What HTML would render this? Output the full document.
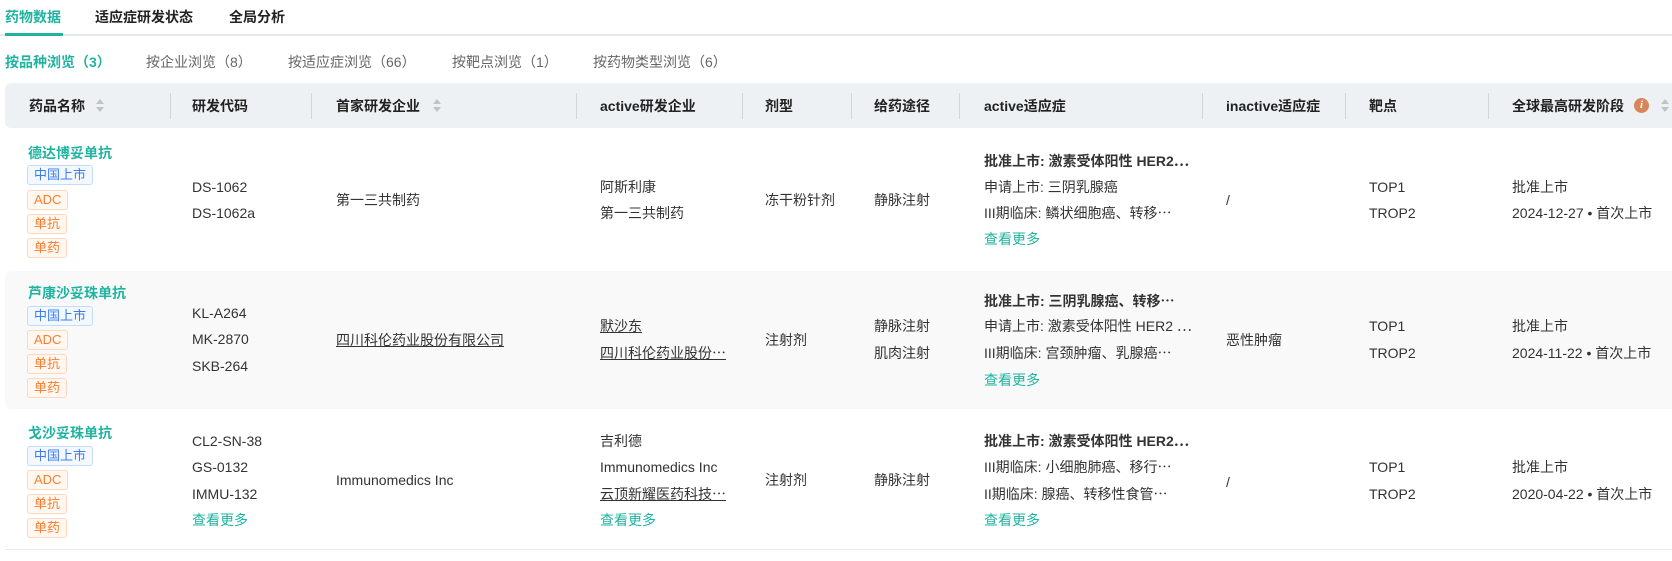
<!DOCTYPE html>
<html><head><meta charset="utf-8"><style>
*{margin:0;padding:0;box-sizing:border-box}
body{width:1672px;height:561px;overflow:hidden;background:#fff;position:relative;font-family:"Liberation Sans","Noto Sans CJK SC",sans-serif;font-size:14px;color:#333}
.a{position:absolute;line-height:20px;white-space:nowrap}
.b{font-weight:bold}
.g{color:#1fb3a0}
.u{text-decoration:underline}
.h{font-weight:bold;color:#222}
.sep{position:absolute;top:93px;width:1px;height:26px;background:#cfd6d8}
.tag{position:absolute;height:20px;line-height:18px;font-size:13px;padding:0 6px;border:1px solid #ffd8bf;background:#fff7f0;color:#fa7d2d;border-radius:3px}
.tag.bl{border-color:#c6dafc;background:#f3f8ff;color:#3b7cf0}
.sort{position:absolute;width:8px;height:14px}
.sort:before{content:"";position:absolute;left:0;top:0;border-left:4px solid transparent;border-right:4px solid transparent;border-bottom:5px solid #c0c4c8}
.sort:after{content:"";position:absolute;left:0;top:8px;border-left:4px solid transparent;border-right:4px solid transparent;border-top:5px solid #c0c4c8}
</style></head><body>
<div class="a b g" style="left:5px;top:7px">药物数据</div>
<div class="a b" style="left:95px;top:7px;color:#222">适应症研发状态</div>
<div class="a b" style="left:229px;top:7px;color:#222">全局分析</div>
<div style="position:absolute;left:0;top:34px;width:1672px;height:2px;background:#e6e8ef"></div>
<div style="position:absolute;left:5px;top:33px;width:58px;height:3px;background:#1fb3a0"></div>
<div class="a b g" style="left:5px;top:52px">按品种浏览（3）</div>
<div class="a" style="left:146px;top:52px;color:#666">按企业浏览（8）</div>
<div class="a" style="left:288px;top:52px;color:#666">按适应症浏览（66）</div>
<div class="a" style="left:452px;top:52px;color:#666">按靶点浏览（1）</div>
<div class="a" style="left:593px;top:52px;color:#666">按药物类型浏览（6）</div>
<div style="position:absolute;left:5px;top:83px;width:1667px;height:45px;background:#eef1f3;border-radius:6px 0 0 6px"></div>
<div class="a h" style="left:29px;top:96px">药品名称</div><div class="sort" style="left:96px;top:99px"></div>
<div class="sep" style="left:170px"></div>
<div class="a h" style="left:192px;top:96px">研发代码</div>
<div class="sep" style="left:311px"></div>
<div class="a h" style="left:336px;top:96px">首家研发企业</div><div class="sort" style="left:433px;top:99px"></div>
<div class="sep" style="left:576px"></div>
<div class="a h" style="left:600px;top:96px">active研发企业</div>
<div class="sep" style="left:742px"></div>
<div class="a h" style="left:765px;top:96px">剂型</div>
<div class="sep" style="left:851px"></div>
<div class="a h" style="left:874px;top:96px">给药途径</div>
<div class="sep" style="left:959px"></div>
<div class="a h" style="left:984px;top:96px">active适应症</div>
<div class="sep" style="left:1202px"></div>
<div class="a h" style="left:1226px;top:96px">inactive适应症</div>
<div class="sep" style="left:1345px"></div>
<div class="a h" style="left:1369px;top:96px">靶点</div>
<div class="sep" style="left:1488px"></div>
<div class="a h" style="left:1512px;top:96px">全球最高研发阶段</div>
<div style="position:absolute;left:1634px;top:98px;width:15px;height:15px;border-radius:50%;background:#d9845a;color:#fff;font:bold italic 11px/15px 'Liberation Serif',serif;text-align:center">i</div>
<div class="sort" style="left:1661px;top:99px"></div>

<div class="a b g" style="left:28px;top:143px">德达博妥单抗</div>
<div class="tag bl" style="left:27px;top:165px">中国上市</div>
<div class="tag" style="left:27px;top:190px">ADC</div>
<div class="tag" style="left:27px;top:214px">单抗</div>
<div class="tag" style="left:27px;top:238px">单药</div>
<div class="a" style="left:192px;top:177px">DS-1062</div>
<div class="a" style="left:192px;top:203px">DS-1062a</div>
<div class="a" style="left:336px;top:190px">第一三共制药</div>
<div class="a" style="left:600px;top:177px">阿斯利康</div>
<div class="a" style="left:600px;top:203px">第一三共制药</div>
<div class="a" style="left:765px;top:190px">冻干粉针剂</div>
<div class="a" style="left:874px;top:190px">静脉注射</div>
<div class="a b" style="left:984px;top:151px">批准上市: 激素受体阳性 HER2⋯</div>
<div class="a" style="left:984px;top:177px">申请上市: 三阴乳腺癌</div>
<div class="a" style="left:984px;top:203px">III期临床: 鳞状细胞癌、转移⋯</div>
<div class="a g" style="left:984px;top:229px">查看更多</div>
<div class="a" style="left:1226px;top:190px">/</div>
<div class="a" style="left:1369px;top:177px">TOP1</div>
<div class="a" style="left:1369px;top:203px">TROP2</div>
<div class="a" style="left:1512px;top:177px">批准上市</div>
<div class="a" style="left:1512px;top:203px">2024-12-27 • 首次上市</div>

<div style="position:absolute;left:5px;top:271px;width:1667px;height:138px;background:#f9f9fa;border-radius:6px 0 0 6px"></div>
<div class="a b g" style="left:28px;top:283px">芦康沙妥珠单抗</div>
<div class="tag bl" style="left:27px;top:306px">中国上市</div>
<div class="tag" style="left:27px;top:330px">ADC</div>
<div class="tag" style="left:27px;top:354px">单抗</div>
<div class="tag" style="left:27px;top:378px">单药</div>
<div class="a" style="left:192px;top:303px">KL-A264</div>
<div class="a" style="left:192px;top:329px">MK-2870</div>
<div class="a" style="left:192px;top:356px">SKB-264</div>
<div class="a u" style="left:336px;top:330px">四川科伦药业股份有限公司</div>
<div class="a u" style="left:600px;top:316px">默沙东</div>
<div class="a u" style="left:600px;top:343px">四川科伦药业股份⋯</div>
<div class="a" style="left:765px;top:330px">注射剂</div>
<div class="a" style="left:874px;top:316px">静脉注射</div>
<div class="a" style="left:874px;top:343px">肌肉注射</div>
<div class="a b" style="left:984px;top:291px">批准上市: 三阴乳腺癌、转移⋯</div>
<div class="a" style="left:984px;top:316px">申请上市: 激素受体阳性 HER2 ⋯</div>
<div class="a" style="left:984px;top:343px">III期临床: 宫颈肿瘤、乳腺癌⋯</div>
<div class="a g" style="left:984px;top:370px">查看更多</div>
<div class="a" style="left:1226px;top:330px">恶性肿瘤</div>
<div class="a" style="left:1369px;top:316px">TOP1</div>
<div class="a" style="left:1369px;top:343px">TROP2</div>
<div class="a" style="left:1512px;top:316px">批准上市</div>
<div class="a" style="left:1512px;top:343px">2024-11-22 • 首次上市</div>

<div class="a b g" style="left:28px;top:423px">戈沙妥珠单抗</div>
<div class="tag bl" style="left:27px;top:446px">中国上市</div>
<div class="tag" style="left:27px;top:470px">ADC</div>
<div class="tag" style="left:27px;top:494px">单抗</div>
<div class="tag" style="left:27px;top:518px">单药</div>
<div class="a" style="left:192px;top:431px">CL2-SN-38</div>
<div class="a" style="left:192px;top:457px">GS-0132</div>
<div class="a" style="left:192px;top:484px">IMMU-132</div>
<div class="a g" style="left:192px;top:510px">查看更多</div>
<div class="a" style="left:336px;top:470px">Immunomedics Inc</div>
<div class="a" style="left:600px;top:431px">吉利德</div>
<div class="a" style="left:600px;top:457px">Immunomedics Inc</div>
<div class="a u" style="left:600px;top:484px">云顶新耀医药科技⋯</div>
<div class="a g" style="left:600px;top:510px">查看更多</div>
<div class="a" style="left:765px;top:470px">注射剂</div>
<div class="a" style="left:874px;top:470px">静脉注射</div>
<div class="a b" style="left:984px;top:431px">批准上市: 激素受体阳性 HER2⋯</div>
<div class="a" style="left:984px;top:457px">III期临床: 小细胞肺癌、移行⋯</div>
<div class="a" style="left:984px;top:484px">II期临床: 腺癌、转移性食管⋯</div>
<div class="a g" style="left:984px;top:510px">查看更多</div>
<div class="a" style="left:1226px;top:472px">/</div>
<div class="a" style="left:1369px;top:457px">TOP1</div>
<div class="a" style="left:1369px;top:484px">TROP2</div>
<div class="a" style="left:1512px;top:457px">批准上市</div>
<div class="a" style="left:1512px;top:484px">2020-04-22 • 首次上市</div>
<div style="position:absolute;left:5px;top:549px;width:1667px;height:1px;background:#e8e9ef"></div>
</body></html>
